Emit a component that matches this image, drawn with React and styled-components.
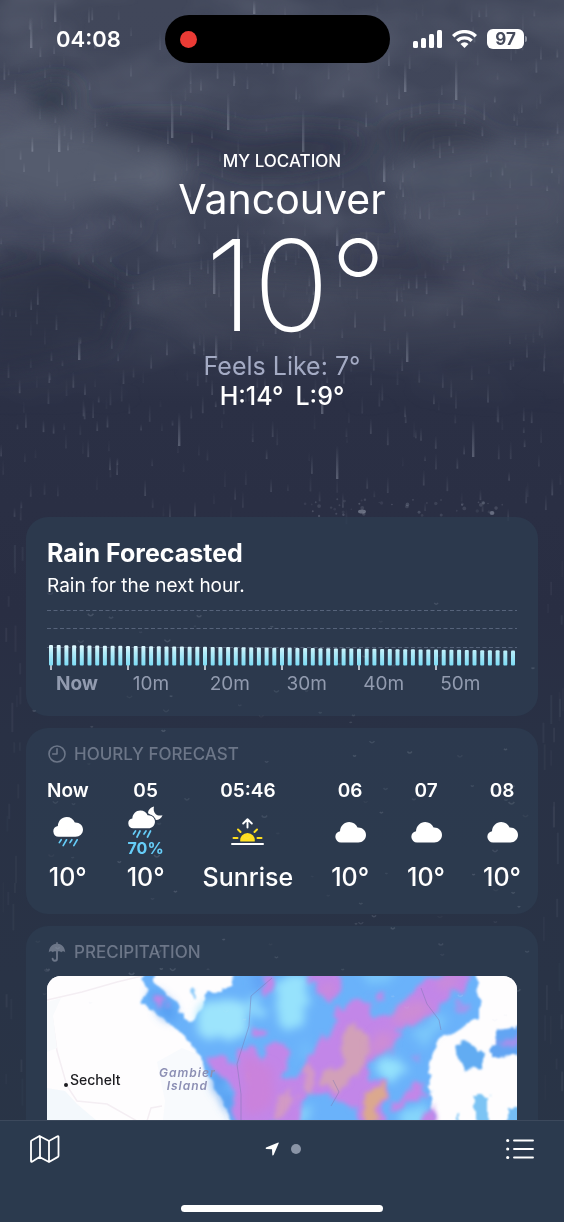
import React from 'react';
import styled, { createGlobalStyle, ThemeProvider } from 'styled-components';

const theme = {
    font: "Inter, 'Noto Sans', 'Liberation Sans', sans-serif",
    colors: {
        sky: '#2a2f44',
        card: 'rgba(45, 60, 80, 0.8)',
        toolbar: '#2b3a4e',
        line: '#3c495c',
        white: '#ffffff',
        muted: '#6c7688',
        label: '#929baf',
        feels: '#a4abc4',
        rain: '#66cdf8',
    },
};

// 고정된 시드로 매번 같은 비를 그린다
const makeRandom = (seed) => {
    let value = seed;
    return () => {
        value = (value * 16807) % 2147483647;
        return value / 2147483647;
    };
};

const random = makeRandom(408);

const STREAKS = Array.from({ length: 520 }, () => {
    const y = random() * 510;
    return {
        x: random() * 564,
        y,
        length: 6 + random() * 14,
        opacity: 0.04 + random() * 0.14,
    };
});

const BIG_STREAKS = [
    [30, 16, 32], [54, 0, 22], [58, 124, 28], [171, 98, 40], [227, 92, 38], [302, 108, 44],
    [404, 62, 30], [455, 58, 42], [383, 154, 28], [213, 244, 50], [215, 334, 26], [336, 445, 34],
    [336, 226, 20], [472, 420, 37], [78, 336, 24], [178, 412, 34], [321, 380, 34], [406, 330, 32], [253, 0, 14],
];

const SIDE_STREAKS = Array.from({ length: 50 }, (_, i) => ({
    x: i % 2 ? 542 + random() * 20 : 2 + random() * 20,
    y: 530 + random() * 580,
    length: 8 + random() * 24,
    opacity: 0.02 + random() * 0.05,
}));

const SPLASHES = Array.from({ length: 46 }, () => ({
    x: 300 + random() * 215,
    y: 499 + random() * 17,
    r: 0.7 + random() * 1.3,
    opacity: 0.08 + random() * 0.16,
}));

const DROPS = Array.from({ length: 110 }, () => ({
    x: 30 + random() * 505,
    y: 522 + random() * 440,
    size: 1 + random() * 2,
    opacity: 0.04 + random() * 0.12,
}));

const BARS = Array.from({ length: 61 }, (_, i) => ({
    x: 4 + i * 7.7,
    top: 42 + (i / 60) * 5.5,
    tick: i % 10 === 0 && i < 60,
}));

const MINUTES = ['Now', '10m', '20m', '30m', '40m', '50m'];

const HOURS = [
    { time: 'Now', icon: 'rain', value: '10°' },
    { time: '05', icon: 'nightRain', chance: '70%', value: '10°' },
    { time: '05:46', icon: 'sunrise', value: 'Sunrise' },
    { time: '06', icon: 'cloud', value: '10°' },
    { time: '07', icon: 'cloud', value: '10°' },
    { time: '08', icon: 'cloud', value: '10°' },
];

const CLOUD = 'M6 20.5a5.7 5.7 0 0 1-1-11.3C5.300 4 9.200 0 14.200 0c3.900 0 6.900 2.100 8.400 5.600C27.200 5.300 31 8.600 31 13c0 4.300-3.400 7.500-7.700 7.500z';

const Sky = () => (
    <SkyArt viewBox="0 0 564 1222" preserveAspectRatio="xMidYMin slice" aria-hidden="true">
        <defs>
            <linearGradient id="sky" x1="0" y1="0" x2="0" y2="1">
                <stop offset="0" stopColor="#41475a" />
                <stop offset="0.16" stopColor="#40465a" />
                <stop offset="0.25" stopColor="#363c50" />
                <stop offset="0.33" stopColor="#2b3045" />
                <stop offset="0.5" stopColor="#292e43" />
                <stop offset="0.6" stopColor="#293145" />
                <stop offset="1" stopColor="#293547" />
            </linearGradient>
            <linearGradient id="fade" x1="0" y1="0" x2="0" y2="1">
                <stop offset="0" stopColor="#fff" />
                <stop offset="0.65" stopColor="#fff" />
                <stop offset="1" stopColor="#000" />
            </linearGradient>
            <linearGradient id="streak" x1="0" y1="0" x2="0" y2="1">
                <stop offset="0" stopColor="#c3cad9" stopOpacity="0" />
                <stop offset="1" stopColor="#c3cad9" />
            </linearGradient>
            <mask id="cloudMask">
                <rect width="564" height="420" fill="url(#fade)" />
            </mask>
            <filter id="noise" x="0" y="0" width="100%" height="100%">
                <feTurbulence type="fractalNoise" baseFrequency="0.010 0.016" numOctaves="3" seed="11" />
                <feColorMatrix values="0 0 0 0 0.5  0 0 0 0 0.53  0 0 0 0 0.62  1.4 0 0 0 -0.56" />
            </filter>
            <filter id="soft" x="-50%" y="-50%" width="200%" height="200%">
                <feGaussianBlur stdDeviation="11" />
            </filter>
        </defs>
        <rect width="564" height="1222" fill="url(#sky)" />
        <g mask="url(#cloudMask)">
            <rect width="564" height="420" filter="url(#noise)" opacity="0.22" />
            <g filter="url(#soft)">
                <path d="M-20 130L50 122L90 130L130 142L180 160L176 196L100 200L60 210L-20 190z" fill="#6a6f82" opacity="0.5" />
                <path d="M-20 96L20 90L30 124L-20 130z" fill="#5e6477" opacity="0.4" />
                <path d="M30 86L70 80L78 100L50 122L36 112z" fill="#2e3448" opacity="0.75" />
                <path d="M80 128L120 118L190 118L250 134L300 128L370 134L350 160L290 172L240 172L196 156L130 138z" fill="#2d3347" opacity="0.65" />
                <path d="M380 170L420 152L470 140L580 150L580 210L420 230z" fill="#5a5f71" opacity="0.4" />
                <path d="M380 128L440 116L470 120L500 146L420 156z" fill="#30364a" opacity="0.6" />
                <path d="M-20 270L60 250L130 290L110 350L-20 380z" fill="#262c40" opacity="0.75" />
                <path d="M120 306L160 284L260 270L570 300L560 340L400 358L300 350L210 346L180 320z" fill="#555a6a" opacity="0.38" />
                <path d="M400 210L560 200L580 250L430 260z" fill="#5e6373" opacity="0.3" />
                <path d="M-20 205L80 210L150 225L100 244L-20 240z" fill="#565b6e" opacity="0.4" />
                <path d="M350 240L480 256L540 290L420 290L350 270z" fill="#30354a" opacity="0.35" />
            </g>
        </g>
        {STREAKS.map((s, i) => (
            <rect key={i} x={s.x} y={s.y} width="1.800" height={s.length} fill="url(#streak)" opacity={s.opacity} />
        ))}
        {SIDE_STREAKS.map((s, i) => (
            <rect key={i} x={s.x} y={s.y} width="2" height={s.length} fill="#c3cad9" opacity={s.opacity} />
        ))}
        {BIG_STREAKS.map(([x, y, length]) => (
            <rect key={`${x}-${y}`} x={x} y={y} width="2.400" height={length} fill="url(#streak)" opacity="0.3" />
        ))}
        {SPLASHES.map((s, i) => (
            <circle key={i} cx={s.x} cy={s.y} r={s.r} fill="#c3cad9" opacity={s.opacity} />
        ))}
        <ellipse cx="362" cy="511.500" rx="4" ry="2" fill="#c3cad9" opacity="0.4" />
        <ellipse cx="492" cy="513" rx="2.500" ry="2" fill="#c3cad9" opacity="0.3" />
    </SkyArt>
);

const Drops = () => (
    <SkyArt viewBox="0 0 564 1222" preserveAspectRatio="xMidYMin slice" aria-hidden="true">
        {DROPS.map((d, i) => (
            <path
                key={i}
                d={`M${d.x - d.size} ${d.y}q${d.size} ${d.size * 1.4} ${d.size * 2} 0`}
                fill="none"
                stroke="#dfe6f2"
                strokeWidth="1.500"
                opacity={d.opacity}
            />
        ))}
    </SkyArt>
);

const SignalIcon = () => (
    <svg width="29" height="18" viewBox="0 0 29 18" fill="#fff" role="img" aria-label="Signal">
        <rect x="0" y="11" width="5" height="7" rx="1.500" />
        <rect x="8" y="8" width="5" height="10" rx="1.500" />
        <rect x="16" y="4" width="5" height="14" rx="1.500" />
        <rect x="24" y="0" width="5" height="18" rx="1.500" />
    </svg>
);

const WifiIcon = () => (
    <svg width="25" height="18" viewBox="0 0 25 18" role="img" aria-label="Wi-Fi">
        <g fill="none" stroke="#fff" strokeWidth="3.400">
            <path d="M1.200 6.300a16 16 0 0 1 22.600 0" />
            <path d="M5.300 10.900a10.200 10.200 0 0 1 14.400 0" />
        </g>
        <path d="M12.500 18l-4-4.100a5.700 5.700 0 0 1 8 0z" fill="#fff" />
    </svg>
);

const ClockIcon = () => (
    <svg width="18" height="18" viewBox="0 0 18 18" fill="none" stroke="currentColor" strokeWidth="1.600" strokeLinecap="round" aria-hidden="true">
        <circle cx="9" cy="9" r="8" />
        <path d="M9 3.700V9H4.700" strokeLinejoin="round" />
    </svg>
);

const UmbrellaIcon = () => (
    <svg width="18" height="20" viewBox="0 0 18 20" aria-hidden="true">
        <path d="M.8 10.400C.9 5.400 4.300 2 8.200 1.700V.9a.8.8 0 0 1 1.600 0v.8c3.900.3 7.300 3.700 7.400 8.700-.8-1.300-2.900-1.500-4-.2-1-1.200-2.200-1.200-3.300-.6H8.100C7 9 5.800 9 4.800 10.200 3.700 8.900 1.600 9.100.8 10.400z" fill="currentColor" />
        <path d="M9 9v7.500a2.200 2.200 0 0 1-4.400.1" fill="none" stroke="currentColor" strokeWidth="1.900" strokeLinecap="round" />
    </svg>
);

const WEATHER_ICONS = {
    cloud: (
        <svg width="31" height="21" viewBox="0 0 31 21" role="img" aria-label="Cloudy">
            <path d={CLOUD} fill="#fff" />
        </svg>
    ),
    rain: (
        <svg width="30" height="30" viewBox="0 0 31 31" role="img" aria-label="Rain">
            <path d={CLOUD} fill="#fff" />
            <path d="M8.500 23.500L6.500 26.500M14 23.500L10.500 29.500M19.500 23.500L17.500 26.500M25 23.500L21.500 29.500" stroke="#66cdf8" strokeWidth="1.700" strokeLinecap="round" />
        </svg>
    ),
    nightRain: (
        <svg width="35" height="32" viewBox="0 0 35 32" role="img" aria-label="Rain at night">
            <path d="M26 .5c-3.800 1-6 3.900-5.900 6.700 1.700 1 2.900 2.500 3.400 4.400 1.500.4 2.700 1.200 3.600 2.300 3.400.4 6.300-1.500 7.400-4.700-2.800.8-5.200.4-6.900-1.300C25.900 6.300 25.200 3.700 26 .5z" fill="#fff" />
            <path d={CLOUD} transform="translate(0 4.500) scale(0.870)" fill="#fff" stroke="#2d3b50" strokeWidth="2.400" paintOrder="stroke" />
            <path d="M7.500 25L5.500 28M12 25L9 31M18 25L16 28M22.500 25L19.500 31" stroke="#66cdf8" strokeWidth="1.700" strokeLinecap="round" />
        </svg>
    ),
    sunrise: (
        <svg width="33" height="28" viewBox="0 0 33 28" role="img" aria-label="Sunrise">
            <path d="M9.300 23.500a7.300 7.300 0 1 1 14.400 0z" fill="#ffdf1f" />
            <path d="M2.500 20H6.500M26.500 20H30.500M7 11.500L9.500 14M26 11.500L23.500 14" stroke="#ffdf1f" strokeWidth="2" strokeLinecap="round" />
            <path d="M16.500 9.500V1.500M12.200 5.500L16.500 1.200L20.800 5.500" fill="none" stroke="#fff" strokeWidth="1.900" strokeLinecap="round" strokeLinejoin="round" />
            <path d="M1 26H32" stroke="#fff" strokeWidth="2" strokeLinecap="round" />
        </svg>
    ),
};

const RainChart = () => (
    <ChartArt viewBox="0 0 470 68" preserveAspectRatio="none" role="img" aria-label="Rain for the next hour">
        <defs>
            <linearGradient id="bar" x1="0" y1="42" x2="0" y2="63" gradientUnits="userSpaceOnUse">
                <stop offset="0" stopColor="#e6fbff" />
                <stop offset="0.35" stopColor="#b4ecf9" />
                <stop offset="1" stopColor="#7cdcf5" />
            </linearGradient>
        </defs>
        <path d="M0 7.500H470M0 25.500H470M0 44.500H470" stroke="#56637a" strokeDasharray="4 2.500" />
        {BARS.map((bar) => (
            <React.Fragment key={bar.x}>
                {bar.tick && <path d={`M${bar.x} 60V67`} stroke="#e4edf5" strokeWidth="1.500" />}
                <rect x={bar.x - 2} y={bar.top} width="4" height={62.5 - bar.top} rx="1" fill="url(#bar)" />
            </React.Fragment>
        ))}
    </ChartArt>
);

const RadarMap = () => (
    <MapArt viewBox="0 0 470 470" preserveAspectRatio="xMinYMin slice" aria-hidden="true">
        <defs>
            <filter id="edge" x="-10%" y="-10%" width="120%" height="120%">
                <feTurbulence type="fractalNoise" baseFrequency="0.090" numOctaves="2" seed="5" />
                <feDisplacementMap in="SourceGraphic" scale="11" xChannelSelector="R" yChannelSelector="G" />
                <feGaussianBlur stdDeviation="1.300" />
            </filter>
            <filter id="edgeSoft" x="-20%" y="-20%" width="140%" height="140%">
                <feTurbulence type="fractalNoise" baseFrequency="0.070" numOctaves="3" seed="9" />
                <feDisplacementMap in="SourceGraphic" scale="20" xChannelSelector="R" yChannelSelector="G" />
                <feGaussianBlur stdDeviation="2.200" />
            </filter>
            <filter id="glow" x="-30%" y="-30%" width="160%" height="160%">
                <feTurbulence type="fractalNoise" baseFrequency="0.060" numOctaves="2" seed="3" />
                <feDisplacementMap in="SourceGraphic" scale="20" xChannelSelector="R" yChannelSelector="G" />
                <feGaussianBlur stdDeviation="5" />
            </filter>
        </defs>
        <rect width="470" height="470" fill="#fefdfe" />
        <path d="M0 24L35 16L70 6L95 0M5 40L10 75L20 110L30 125L60 128L90 145M100 145L104 132L115 130" fill="none" stroke="#f4eef3" strokeWidth="1.500" />
        <path d="M0 112L18 115L30 128L50 145V200H0z" fill="#f3f8fc" />
        <path d="M0 26L14 22L6 40L10 72L0 76z" fill="#f8fafc" />
        <path d="M110 86L135 72L155 80L180 145V200H110L118 125z" fill="#f8fafd" />

        <g filter="url(#edge)">
            <path
                d="M93 -20L100 18L94 25L102 31L120 45L140 63L155 83L160 98L170 115L180 132L188 150V300H386V145L384 120L381 95L384 75L396 60L415 53L421 45H432V20L429 10V-20H192L186 8L173 17L158 17L156 32L148 47L136 42L130 28L120 18L106 4V-20z"
                fill="#6bb2fa"
            />
            <path d="M145 10L148 12L149 24L146 24z" fill="#8ecbfa" />
            <path d="M408 68L424 66L438 78L436 92L420 94L410 84z" fill="#62acf2" />
            <path d="M452 54L480 50V78L450 80L444 78V68L452 68z" fill="#62a5f3" />
            <path d="M428 120H441V160H428z" fill="#7cc4f4" />
            <path d="M462 132H480V160H462z" fill="#74bdf5" />
            <path d="M409 136H412V160H409z" fill="#7cc4f4" />
        </g>

        <g filter="url(#glow)">
            <path d="M150 36L176 22L200 24L200 54L180 64L152 58z" fill="#9ce4fc" />
            <path d="M228 6L258 -4L258 50L240 56L228 40z" fill="#96e2fc" />
            <path d="M204 22H216V40H204z" fill="#92dcfc" />
            <path d="M334 84L350 80L356 98L342 104L330 96z" fill="#94e2fc" />
            <path d="M366 56L400 40L392 56L372 74z" fill="#7cc8fa" />
            <path d="M315 -6L350 -6L340 10L320 10z" fill="#7bc8fb" />
            <path d="M244 134L262 126L262 150H242z" fill="#84cffa" />
            <path d="M360 136L380 126L380 150H350z" fill="#86d6fb" />
            <path d="M252 70L264 66L264 84L252 82z" fill="#6fbafa" />
            <path d="M104 10L116 24L132 40L126 44L106 30z" fill="#569ff2" />
            <path d="M162 88L172 92L186 130L190 150L176 128z" fill="#569ff0" />
            <path d="M200 -6H222V14H204z" fill="#62a4f5" />
        </g>

        <g filter="url(#edgeSoft)" fill="#c286e8">
            <path d="M108 21L118 22L121 28L111 29z" />
            <path d="M214 2L226 4L222 16L214 14z" />
            <path d="M208 50L218 54L216 62L208 60z" />
            <path d="M160 80L178 82L192 90L194 74L206 74L216 86L222 66L236 64L240 82L236 102L248 104L260 90L268 66L276 56L284 110L258 116L248 150H190L186 112L164 88z" />
            <path d="M264 -4H294L298 18L288 22L280 26L268 16z" />
            <path d="M420 -8V14L398 20L388 34L376 44L352 56L342 74L324 84L322 106L338 104L336 150H310L306 132L284 120L266 122L256 104L262 86L274 66L290 48L292 32L318 22L328 42L352 32L368 14L392 2L404 -8z" />
            <path d="M330 20L338 14L337 28L331 30z" />
            <path d="M342 124L358 118L366 106L377 110L374 122L346 136z" />
            <path d="M374 140L388 130V150H374z" />
            <path d="M410 26H420V34H410z" opacity="0.6" />
            <path d="M362 80H374V86H364z" opacity="0.5" />
            <path d="M454 64L480 56V68L454 72z" opacity="0.7" />
        </g>

        <g filter="url(#edgeSoft)" fill="#d2a0b8">
            <path d="M298 52L312 48L320 70L322 82L312 98L302 108L286 114L272 104L280 92L298 86L294 68z" />
            <path d="M320 118L336 106L334 124L328 150H320z" fill="#dba88e" />
            <path d="M226 132L242 112L250 120L240 136L228 150z" fill="#d29ac4" />
            <path d="M258 92L266 86L266 118L258 116z" fill="#d29ac4" />
            <path d="M201 96L208 94L208 102L202 103z" fill="#dd96a8" />
        </g>
        <g filter="url(#glow)" fill="#cd8cd4">
            <path d="M272 6L286 8L284 20L274 16z" />
            <path d="M346 38L372 22L388 26L368 42L350 50z" />
            <path d="M392 6L412 0L414 8L396 16z" />
            <path d="M196 80L226 92L228 130L196 146z" fill="#ca82dc" />
            <path d="M328 60L346 56L338 74L326 78z" />
        </g>

        <path d="M225 2L204 20L202 50L190 88L194 118L194 145M374 12L380 28L392 44L394 54M286 104L292 116L284 130" fill="none" stroke="#7a76b0" strokeOpacity="0.45" />
    </MapArt>
);

const MapIcon = () => (
    <svg width="30" height="28" viewBox="0 0 30 28" fill="none" stroke="#fff" strokeWidth="1.800" strokeLinejoin="round" aria-hidden="true">
        <path d="M1 6.500Q1 5.800 1.600 5.500L9.500 1L19 6L27.500 1.300Q28.500 1 28.500 2V20.800Q28.500 21.500 28 21.900L19 27L9.500 22L2 26.700Q1 27 1 26z" />
        <path d="M10 1.200V22M19 6V27" />
    </svg>
);

const ListIcon = () => (
    <svg width="28" height="22" viewBox="0 0 28 22" stroke="#fff" strokeLinecap="round" aria-hidden="true">
        <path d="M8 2.500H27M8 11H27M8 19.500H27" strokeWidth="1.900" />
        <path d="M1.700 2.500H1.710M1.700 11H1.710M1.700 19.500H1.710" strokeWidth="3.200" />
    </svg>
);

const App = () => (
    <ThemeProvider theme={theme}>
        <GlobalStyle />
        <Screen>
            <Sky />
            <StatusBar>
                <Time>04:08</Time>
                <Island>
                    <RecordDot />
                </Island>
                <StatusIcons>
                    <SignalIcon />
                    <WifiIcon />
                    <Battery>97</Battery>
                </StatusIcons>
            </StatusBar>
            <Content>
                <Hero>
                    <Location>MY LOCATION</Location>
                    <City>Vancouver</City>
                    <Temperature>10°</Temperature>
                    <FeelsLike>Feels Like: 7°</FeelsLike>
                    <HighLow>
                        <span>H:14°</span>
                        <span>L:9°</span>
                    </HighLow>
                </Hero>
                <Cards>
                    <Card>
                        <RainTitle>Rain Forecasted</RainTitle>
                        <RainText>Rain for the next hour.</RainText>
                        <RainChart />
                        <Minutes>
                            {MINUTES.map((minute, i) => (
                                <Minute key={minute} $bold={i === 0}>{minute}</Minute>
                            ))}
                        </Minutes>
                    </Card>
                    <Card>
                        <CardHeader>
                            <ClockIcon />
                            HOURLY FORECAST
                        </CardHeader>
                        <Hours>
                            {HOURS.map((hour) => (
                                <Hour key={hour.time}>
                                    <HourTime>{hour.time}</HourTime>
                                    <HourIcon>
                                        {WEATHER_ICONS[hour.icon]}
                                        {hour.chance && <Chance>{hour.chance}</Chance>}
                                    </HourIcon>
                                    <HourValue>{hour.value}</HourValue>
                                </Hour>
                            ))}
                        </Hours>
                    </Card>
                    <Card>
                        <CardHeader>
                            <UmbrellaIcon />
                            PRECIPITATION
                        </CardHeader>
                        <MapBox>
                            <RadarMap />
                            <Town>Sechelt</Town>
                            <IslandName>Gambier<br />Island</IslandName>
                        </MapBox>
                    </Card>
                </Cards>
                <Drops />
            </Content>
            <Toolbar>
                <ToolbarRow>
                    <ToolButton type="button" aria-label="Map">
                        <MapIcon />
                    </ToolButton>
                    <Pages>
                        <svg width="14" height="14" viewBox="0 0 14 14" fill="#fff" aria-hidden="true">
                            <path d="M13.300.4Q14 .3 13.700 1.200L8.600 13Q7.800 14 7.300 12.900L7 7.200L1.200 6.900Q0 6.300 1 5.600z" />
                        </svg>
                        <PageDot />
                    </Pages>
                    <ToolButton type="button" aria-label="Locations">
                        <ListIcon />
                    </ToolButton>
                </ToolbarRow>
                <HomeBar />
            </Toolbar>
        </Screen>
    </ThemeProvider>
);

export default App;

const GlobalStyle = createGlobalStyle`
    * {
        box-sizing: border-box;
    }
    body, h1, h2, p {
        margin: 0;
    }
    body {
        background: #2a2f44;
    }
`;

const Screen = styled.div`
    position: relative;
    display: flex;
    flex-direction: column;
    height: 100vh;
    overflow: hidden;
    background: ${({ theme }) => theme.colors.sky};
    color: ${({ theme }) => theme.colors.white};
    font-family: ${({ theme }) => theme.font};
`;

const SkyArt = styled.svg`
    position: absolute;
    top: 0;
    left: 0;
    width: 100%;
    pointer-events: none;
`;

const StatusBar = styled.header`
    position: relative;
    display: grid;
    grid-template-columns: 1fr 45% 1fr;
    align-items: center;
    flex-shrink: 0;
    padding: 15px 37px 0 28px;
`;

const Time = styled.time`
    padding-left: 28px;
    font-size: 22px;
    font-weight: 600;
    line-height: 28px;
`;

const Island = styled.div`
    display: flex;
    align-items: center;
    height: 48px;
    padding-left: 15px;
    border-radius: 24px;
    background: #000;
`;

const RecordDot = styled.span`
    width: 17px;
    height: 17px;
    border-radius: 50%;
    background: #eb3b35;
`;

const StatusIcons = styled.div`
    display: flex;
    align-items: center;
    justify-content: flex-end;
    gap: 10px;
`;

const Battery = styled.span`
    position: relative;
    width: 37px;
    margin-right: 3px;
    border-radius: 6px;
    background: #fff;
    color: #454a5b;
    font-size: 17px;
    font-weight: 700;
    line-height: 20px;
    text-align: center;

    &::after {
        content: '';
        position: absolute;
        top: 7px;
        right: -3px;
        width: 2px;
        height: 6px;
        border-radius: 0 2px 2px 0;
        background: #8d92a0;
    }
`;

const Content = styled.main`
    position: relative;
    flex: 1;
    min-height: 0;
    overflow-y: auto;
    scrollbar-width: none;
`;

const Hero = styled.section`
    display: flex;
    flex-direction: column;
    align-items: center;
    padding: 86px 20px 106px;
`;

const Location = styled.p`
    font-size: 17px;
    font-weight: 500;
    line-height: 24px;
`;

const City = styled.h1`
    font-size: 41px;
    font-weight: 400;
    line-height: 52px;
`;

const Temperature = styled.p`
    padding-left: 28px;
    margin-bottom: 6px;
    font-size: 126px;
    font-weight: 200;
    line-height: 120px;
`;

const FeelsLike = styled.p`
    color: ${({ theme }) => theme.colors.feels};
    font-size: 25px;
    line-height: 30px;
`;

const HighLow = styled.p`
    display: flex;
    gap: 12px;
    font-size: 25px;
    font-weight: 500;
    line-height: 30px;
`;

const Cards = styled.div`
    display: flex;
    flex-direction: column;
    gap: 12px;
    padding: 0 26px;
`;

const Card = styled.section`
    padding: 20px 21px;
    border-radius: 22px;
    background: ${({ theme }) => theme.colors.card};

    & + & {
        padding-top: 14px;
    }
`;

const RainTitle = styled.h2`
    font-size: 25px;
    font-weight: 700;
    line-height: 32px;
`;

const RainText = styled.p`
    font-size: 19px;
    line-height: 34px;
`;

const ChartArt = styled.svg`
    display: block;
    width: 100%;
    height: 68px;
`;

const Minutes = styled.div`
    display: grid;
    grid-template-columns: repeat(6, 1fr);
    padding-left: 9px;
`;

const Minute = styled.span`
    color: ${({ theme }) => theme.colors.label};
    font-size: 19px;
    font-weight: ${({ $bold }) => ($bold ? 700 : 400)};
    line-height: 25px;
`;

const CardHeader = styled.h2`
    display: flex;
    align-items: center;
    gap: 8px;
    padding-left: 1px;
    color: ${({ theme }) => theme.colors.muted};
    font-size: 17px;
    font-weight: 500;
    line-height: 24px;
`;

const Hours = styled.div`
    display: flex;
    justify-content: space-between;
    margin: 12px -4px 0 0;
`;

const Hour = styled.div`
    display: flex;
    flex-direction: column;
    align-items: center;
`;

const HourTime = styled.span`
    font-size: 19px;
    font-weight: 600;
    line-height: 26px;
`;

const HourIcon = styled.div`
    display: flex;
    flex-direction: column;
    align-items: center;
    justify-content: center;
    height: 56px;
`;

const Chance = styled.span`
    color: ${({ theme }) => theme.colors.rain};
    font-size: 16px;
    font-weight: 700;
    line-height: 20px;
`;

const HourValue = styled.span`
    font-size: 25px;
    font-weight: 500;
    line-height: 34px;
`;

const MapBox = styled.div`
    position: relative;
    height: 470px;
    margin-top: 12px;
    overflow: hidden;
    border-radius: 14px;
    background: #fff;
`;

const MapArt = styled.svg`
    display: block;
    width: 100%;
    height: 100%;
`;

const Town = styled.span`
    position: absolute;
    top: 96px;
    left: 23px;
    color: #1c1c20;
    font-size: 14px;
    font-weight: 500;
    line-height: 16px;

    &::before {
        content: '';
        position: absolute;
        bottom: 1px;
        left: -6px;
        width: 4px;
        height: 4px;
        border-radius: 50%;
        background: #1c1c20;
    }
`;

const IslandName = styled.span`
    position: absolute;
    top: 90px;
    left: 112px;
    color: #8c8fb4;
    font-size: 12px;
    font-style: italic;
    font-weight: 600;
    letter-spacing: 1px;
    line-height: 13px;
    text-align: center;
`;

const Toolbar = styled.footer`
    position: relative;
    display: flex;
    flex-direction: column;
    align-items: center;
    gap: 42px;
    flex-shrink: 0;
    padding: 14px 30px 10px;
    border-top: 1px solid ${({ theme }) => theme.colors.line};
    background: ${({ theme }) => theme.colors.toolbar};
`;

const ToolbarRow = styled.nav`
    display: flex;
    align-items: center;
    justify-content: space-between;
    width: 100%;
`;

const ToolButton = styled.button`
    display: flex;
    align-items: center;
    justify-content: center;
    height: 28px;
    padding: 0;
    border: none;
    background: none;
    cursor: pointer;
`;

const Pages = styled.div`
    display: flex;
    align-items: center;
    gap: 12px;
`;

const PageDot = styled.span`
    width: 10px;
    height: 10px;
    border-radius: 50%;
    background: #8a94a6;
`;

const HomeBar = styled.span`
    width: 40%;
    height: 7px;
    border-radius: 4px;
    background: #fff;
`;
